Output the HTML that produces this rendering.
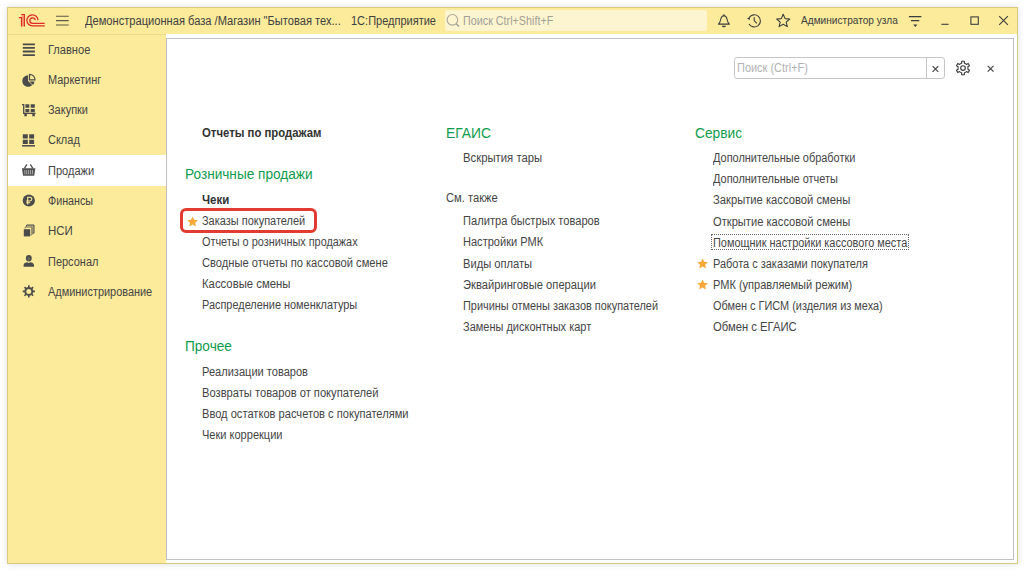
<!DOCTYPE html>
<html lang="ru">
<head>
<meta charset="utf-8">
<title>1С:Предприятие</title>
<style>
html,body{margin:0;padding:0;}
body{width:1024px;height:571px;background:#fff;position:relative;overflow:hidden;font-family:"Liberation Sans",Arial,sans-serif;font-size:12px;color:#3b3b3b;}
div,svg{position:absolute;}
#win{left:7px;top:7px;width:1011px;height:557px;box-sizing:border-box;border:1px solid #d8ca7c;background:#fff;box-shadow:0 0 7px rgba(0,0,0,.13);}
#title{left:8px;top:8px;width:1009px;height:26px;background:#fbeb9b;}
#titleline{left:8px;top:34px;width:158px;height:1px;background:#eadc8f;}
#side{left:8px;top:35px;width:158px;height:528px;background:#fbeb9b;}
#sel{left:8px;top:155px;width:158px;height:31px;background:#fff;}
#panel{left:166px;top:38px;width:848px;height:522px;box-sizing:border-box;border:1px solid #c0c0c0;background:#fff;}
#gsearch{left:445px;top:10px;width:262px;height:21px;background:#fdf5cf;border-radius:2px;}
.i,.h,.s,.tt{white-space:nowrap;transform-origin:0 0;}
.i{font-size:12px;line-height:14px;color:#454545;}
.b{font-weight:bold;color:#333;}
.h{font-size:15.2px;line-height:17px;color:#0e9c4c;}
.s{font-size:12px;line-height:14px;color:#444;}
.tt{font-size:12px;line-height:14px;color:#404040;}
.ph{font-size:12px;line-height:14px;color:#a3a097;}
.us{font-size:10.2px;line-height:11px;}
.ph2{color:#b2b2b2;}
#hl{left:180px;top:208px;width:137px;height:25px;box-sizing:border-box;border:3px solid #e23b32;border-radius:6px;}
#focus{left:711px;top:234px;width:198px;height:16px;box-sizing:border-box;border:1px dotted #6a6a6a;}
#psearch{left:734px;top:57px;width:211px;height:22px;box-sizing:border-box;border:1px solid #c6c6c6;border-radius:3px;background:#fff;}
#psdiv{left:926px;top:58px;width:1px;height:20px;background:#c6c6c6;}
</style>
</head>
<body>
<div id="win"></div>
<div id="title"></div>
<div id="titleline"></div>
<div id="side"></div>
<div id="sel"></div>
<div id="panel"></div>
<div id="gsearch"></div>

<!-- title bar -->
<svg id="logo" style="left:18px;top:13px" width="28" height="15" viewBox="18 13 28 15">
  <path d="M21.5 14.4H24.4V26.5H21.5V17.6Z" fill="#f0a274"/>
  <path d="M19 17.6H21.5V26.6M21.2 14.5H24.4V26.6" stroke="#df2a26" stroke-width="1.15" fill="none"/>
  <path d="M37.95 20.1 A5.55 5.55 0 1 0 32.3 25.9 L44.7 25.9" stroke="#df2a26" stroke-width="1.25" fill="none"/>
  <path d="M35.3 20.1 A2.75 2.75 0 1 0 32.45 23.3 L44.7 23.3" stroke="#df2a26" stroke-width="1.25" fill="none"/>
</svg>
<svg id="burger" style="left:55px;top:14px" width="15" height="13" viewBox="55 14 15 13">
  <path d="M56 16.3H68.7M56 20.6H68.7M56 25H68.7" stroke="#5e5a48" stroke-width="1.1" fill="none"/>
</svg>
    <div class="tt" style="left:84.9px;top:14px;transform:scaleX(0.9264)">Демонстрационная база /Магазин "Бытовая тех...</div>
    <div class="tt" style="left:350.7px;top:14px;transform:scaleX(0.9175)">1С:Предприятие</div>
    <div class="tt ph" style="left:463.4px;top:14px;transform:scaleX(0.8975)">Поиск Ctrl+Shift+F</div>
    <div class="tt us" style="left:800.8px;top:15px;transform:scaleX(0.9919)">Администратор узла</div>
<svg id="mag" style="left:445px;top:12px" width="17" height="17" viewBox="445 12 17 17">
  <circle cx="452.4" cy="19.8" r="5.3" stroke="#a9a69a" stroke-width="1.1" fill="none"/>
  <path d="M456.3 23.7L459 26.6" stroke="#a9a69a" stroke-width="1.6" fill="none"/>
</svg>
<svg id="bell" style="left:716px;top:12px" width="17" height="17" viewBox="716 12 17 17">
  <path d="M718.4 24.1 C720.7 22.4 720.5 19.4 721.2 17.7 C721.8 16.3 722.8 15.7 723.9 15.6 C725 15.7 726 16.3 726.6 17.7 C727.3 19.4 727.1 22.4 729.4 24.1 Z M723.9 14.2V15.6" stroke="#3d3d3d" stroke-width="1.1" fill="none" stroke-linejoin="round"/>
  <path d="M721.9 25.7H725.9A2 1.5 0 0 1 721.9 25.7Z" fill="#3d3d3d"/>
</svg>
<svg id="hist" style="left:745px;top:12px" width="18" height="17" viewBox="745 12 18 17">
  <path d="M749.2 17.6 A6.1 6.1 0 1 1 749 23.9" stroke="#3d3d3d" stroke-width="1.1" fill="none"/>
  <path d="M747 18.5L749.9 17V19.9Z" fill="#3d3d3d"/>
  <path d="M754.2 17.2 V20.5 L756.8 23.3" stroke="#3d3d3d" stroke-width="1.1" fill="none"/>
</svg>
<svg id="fav" style="left:775px;top:12px" width="17" height="17" viewBox="775 12 17 17">
  <path d="M783.2 14.3 L785.1 18.6 L789.7 19 L786.2 22.1 L787.3 26.6 L783.2 24.2 L779.1 26.6 L780.2 22.1 L776.7 19 L781.3 18.6 Z" stroke="#3d3d3d" stroke-width="1.1" fill="none" stroke-linejoin="round"/>
</svg>
<svg id="menu" style="left:907px;top:14px" width="16" height="14" viewBox="907 14 16 14">
  <path d="M908.9 16.6H921.4M911 20.6H919.3" stroke="#3d3d3d" stroke-width="1.1" fill="none"/>
  <path d="M913.2 24.6H917.4L915.3 27Z" fill="#3d3d3d"/>
</svg>
<svg id="wmin" style="left:940px;top:14px" width="10" height="13" viewBox="940 14 10 13">
  <path d="M941.4 24.3H948.6" stroke="#3d3d3d" stroke-width="1.1" fill="none"/>
</svg>
<svg id="wmax" style="left:969px;top:15px" width="11" height="11" viewBox="969 15 11 11">
  <rect x="970.9" y="16.9" width="7.4" height="7.4" stroke="#3d3d3d" stroke-width="1.1" fill="none"/>
</svg>
<svg id="wclose" style="left:997px;top:14px" width="13" height="13" viewBox="997 14 13 13">
  <path d="M999.2 16.2L1007.9 24.9M1007.9 16.2L999.2 24.9" stroke="#3d3d3d" stroke-width="1.1" fill="none"/>
</svg>

<!-- sidebar -->
    <div class="s" style="left:47.9px;top:43px;transform:scaleX(0.9224)">Главное</div>
    <div class="s" style="left:47.9px;top:73px;transform:scaleX(0.9118)">Маркетинг</div>
    <div class="s" style="left:47.9px;top:103px;transform:scaleX(0.9140)">Закупки</div>
    <div class="s" style="left:47.9px;top:133px;transform:scaleX(0.9155)">Склад</div>
    <div class="s" style="left:47.9px;top:164px;transform:scaleX(0.9197)">Продажи</div>
    <div class="s" style="left:47.9px;top:194px;transform:scaleX(0.8950)">Финансы</div>
    <div class="s" style="left:47.9px;top:224px;transform:scaleX(0.9550)">НСИ</div>
    <div class="s" style="left:47.9px;top:255px;transform:scaleX(0.9148)">Персонал</div>
    <div class="s" style="left:47.9px;top:285px;transform:scaleX(0.9105)">Администрирование</div>
<svg id="ic1" style="left:21px;top:42px" width="16" height="16" viewBox="21 42 16 16">
  <path d="M22.8 44.4H34.9M22.8 47.9H34.9M22.8 51.5H34.9M22.8 55.1H34.9" stroke="#4b4b4b" stroke-width="1.8" fill="none"/>
</svg>
<svg id="ic2" style="left:21px;top:72px" width="16" height="16" viewBox="21 72 16 16">
  <path d="M28.1 81 L28.1 75.2 A5.8 5.8 0 1 0 32.2 85.1 Z" fill="#4b4b4b"/>
  <path d="M29.3 81.4 L34.4 81.4 A5.6 5.6 0 0 1 33.1 84.9 Z" fill="#4b4b4b"/>
  <path d="M29.5 74.3 A5.5 5.5 0 0 1 35 79.8 L29.5 79.8 Z" stroke="#4b4b4b" stroke-width="1.2" fill="none"/>
</svg>
<svg id="ic3" style="left:21px;top:102px" width="16" height="16" viewBox="21 102 16 16">
  <path d="M22 104.6H23.7V113.3H35.6" stroke="#4b4b4b" stroke-width="1.3" fill="none"/>
  <path d="M25.4 104.3h3.9v3.5h-3.9zM30.7 104.3h4.1v3.5h-4.1zM25.4 108.9h3.9v3.3h-3.9zM30.7 108.9h4.1v3.3h-4.1z" fill="#4b4b4b"/>
  <rect x="24.3" y="113.8" width="2.5" height="2.5" fill="#4b4b4b"/><rect x="32.3" y="113.8" width="2.5" height="2.5" fill="#4b4b4b"/>
</svg>
<svg id="ic4" style="left:21px;top:132px" width="16" height="16" viewBox="21 132 16 16">
  <path d="M22.8 134.2h5v4.4h-5zM29.2 134.2h4.9v4.4h-4.9zM22.8 139.7h5v4.2h-5zM29.2 139.7h4.9v4.2h-4.9z" fill="#4b4b4b"/>
  <path d="M22 145.8H35" stroke="#4b4b4b" stroke-width="1.5" fill="none"/>
</svg>
<svg id="ic5" style="left:21px;top:162px" width="16" height="16" viewBox="21 162 16 16">
  <path d="M21.9 168.2H35.4L34.2 175.7H23.1Z" fill="#4f4f4f"/>
  <path d="M24.7 170L25 174.4M26.7 170L26.8 174.4M28.65 170V174.4M30.6 170L30.5 174.4M32.6 170L32.3 174.4" stroke="#e8e8e8" stroke-width="0.6" fill="none"/>
  <path d="M24.4 168.4L26.9 164.4M32.8 168.4L30.3 164.4" stroke="#4f4f4f" stroke-width="1.3" fill="none"/>
</svg>
<svg id="ic6" style="left:21px;top:192px" width="16" height="16" viewBox="21 192 16 16">
  <circle cx="28.8" cy="200.5" r="6.1" fill="#4b4b4b"/>
  <path d="M27.7 204.6V197.2H29.9A1.9 1.9 0 0 1 29.9 201H26.2M26.2 202.8H30.2" stroke="#fbeb9b" stroke-width="1.1" fill="none"/>
</svg>
<svg id="ic7" style="left:21px;top:222px" width="16" height="16" viewBox="21 222 16 16">
  <path d="M26.4 225H34V233.2H31V226.6H26.4Z" fill="#b9b283"/>
  <path d="M26.6 226.6V225H34V233.2H32.4" stroke="#4b4b4b" stroke-width="1" fill="none"/>
  <path d="M25.2 228.4V227H32V234.8H30.6" stroke="#7a7658" stroke-width="1" fill="none"/>
  <rect x="23.8" y="229.2" width="6.4" height="7.2" fill="#4b4b4b"/>
</svg>
<svg id="ic8" style="left:21px;top:252px" width="16" height="16" viewBox="21 252 16 16">
  <ellipse cx="28.8" cy="258.2" rx="2.9" ry="3.2" fill="#4b4b4b"/>
  <ellipse cx="28.8" cy="259" rx="1.4" ry="1.7" fill="#6d6a55"/>
  <path d="M23.6 266.7V265C23.6 263.4 25.6 262.5 27.3 262.3L28.8 263L30.3 262.3C32 262.5 34 263.4 34 265V266.7Z" fill="#4b4b4b"/>
</svg>
<svg id="ic9" style="left:21px;top:284px" width="16" height="16" viewBox="21 284 16 16">
  <circle cx="28.8" cy="291.4" r="3.5" stroke="#4b4b4b" stroke-width="2" fill="none"/>
  <path d="M28.8 285.3V287.4M28.8 295.4V297.5M22.7 291.4H24.8M32.8 291.4H34.9M24.5 287.1L26 288.6M31.6 294.2L33.1 295.7M24.5 295.7L26 294.2M31.6 288.6L33.1 287.1" stroke="#4b4b4b" stroke-width="1.6" fill="none"/>
</svg>

<!-- panel content -->
<div id="hl"></div>
<div id="focus"></div>
    <div class="i b" style="left:202.4px;top:126px;transform:scaleX(0.9461)">Отчеты по продажам</div>
    <div class="h" style="left:185.1px;top:165px;transform:scaleX(0.8966)">Розничные продажи</div>
    <div class="i b" style="left:202.4px;top:193px;transform:scaleX(0.9579)">Чеки</div>
    <div class="i" style="left:202.4px;top:214px;transform:scaleX(0.9139)">Заказы покупателей</div>
    <div class="i" style="left:202.4px;top:235px;transform:scaleX(0.9064)">Отчеты о розничных продажах</div>
    <div class="i" style="left:202.4px;top:256px;transform:scaleX(0.9288)">Сводные отчеты по кассовой смене</div>
    <div class="i" style="left:202.4px;top:277px;transform:scaleX(0.9439)">Кассовые смены</div>
    <div class="i" style="left:202.4px;top:298px;transform:scaleX(0.9097)">Распределение номенклатуры</div>
    <div class="h" style="left:185.1px;top:337px;transform:scaleX(0.8971)">Прочее</div>
    <div class="i" style="left:202.4px;top:365px;transform:scaleX(0.9217)">Реализации товаров</div>
    <div class="i" style="left:202.4px;top:386px;transform:scaleX(0.9305)">Возвраты товаров от покупателей</div>
    <div class="i" style="left:202.4px;top:407px;transform:scaleX(0.9257)">Ввод остатков расчетов с покупателями</div>
    <div class="i" style="left:202.4px;top:428px;transform:scaleX(0.9192)">Чеки коррекции</div>
    <div class="h" style="left:445.7px;top:124px;transform:scaleX(0.9097)">ЕГАИС</div>
    <div class="i" style="left:463.2px;top:151px;transform:scaleX(0.9437)">Вскрытия тары</div>
    <div class="i" style="left:445.7px;top:191px;transform:scaleX(0.9320)">См. также</div>
    <div class="i" style="left:463.2px;top:214px;transform:scaleX(0.9269)">Палитра быстрых товаров</div>
    <div class="i" style="left:463.2px;top:235px;transform:scaleX(0.9204)">Настройки РМК</div>
    <div class="i" style="left:463.2px;top:257px;transform:scaleX(0.9291)">Виды оплаты</div>
    <div class="i" style="left:463.2px;top:278px;transform:scaleX(0.9309)">Эквайринговые операции</div>
    <div class="i" style="left:463.2px;top:299px;transform:scaleX(0.9094)">Причины отмены заказов покупателей</div>
    <div class="i" style="left:463.2px;top:320px;transform:scaleX(0.9157)">Замены дисконтных карт</div>
    <div class="h" style="left:695.3px;top:124px;transform:scaleX(0.9036)">Сервис</div>
    <div class="i" style="left:712.7px;top:151px;transform:scaleX(0.9131)">Дополнительные обработки</div>
    <div class="i" style="left:712.7px;top:172px;transform:scaleX(0.9124)">Дополнительные отчеты</div>
    <div class="i" style="left:712.7px;top:193px;transform:scaleX(0.9345)">Закрытие кассовой смены</div>
    <div class="i" style="left:712.7px;top:215px;transform:scaleX(0.9288)">Открытие кассовой смены</div>
    <div class="i" style="left:712.7px;top:236px;transform:scaleX(0.9116)">Помощник настройки кассового места</div>
    <div class="i" style="left:712.7px;top:257px;transform:scaleX(0.9135)">Работа с заказами покупателя</div>
    <div class="i" style="left:712.7px;top:278px;transform:scaleX(0.9194)">РМК (управляемый режим)</div>
    <div class="i" style="left:712.7px;top:299px;transform:scaleX(0.9092)">Обмен с ГИСМ (изделия из меха)</div>
    <div class="i" style="left:712.7px;top:320px;transform:scaleX(0.9388)">Обмен с ЕГАИС</div>
<svg class="star" style="left:186.8px;top:215.8px" width="12" height="11" viewBox="0 0 12 11"><path d="M5.6 0.4L7.15 3.85L11 4.25L8.15 6.8L8.95 10.5L5.6 8.6L2.25 10.5L3.05 6.8L0.2 4.25L4.05 3.85Z" fill="#f8a938"/></svg>
<svg class="star" style="left:696.9px;top:258.2px" width="12" height="11" viewBox="0 0 12 11"><path d="M5.6 0.4L7.15 3.85L11 4.25L8.15 6.8L8.95 10.5L5.6 8.6L2.25 10.5L3.05 6.8L0.2 4.25L4.05 3.85Z" fill="#f8a938"/></svg>
<svg class="star" style="left:696.9px;top:279.3px" width="12" height="11" viewBox="0 0 12 11"><path d="M5.6 0.4L7.15 3.85L11 4.25L8.15 6.8L8.95 10.5L5.6 8.6L2.25 10.5L3.05 6.8L0.2 4.25L4.05 3.85Z" fill="#f8a938"/></svg>

<!-- panel search -->
<div id="psearch"></div>
<div id="psdiv"></div>
    <div class="i ph2" style="left:736.7px;top:61px;transform:scaleX(0.9139)">Поиск (Ctrl+F)</div>
<svg id="psx" style="left:931px;top:64px" width="10" height="10" viewBox="931 64 10 10">
  <path d="M932.6 66.1L938.3 71.8M938.3 66.1L932.6 71.8" stroke="#444" stroke-width="1.2" fill="none"/>
</svg>
<svg id="gear" style="left:954px;top:59px" width="18" height="18" viewBox="-9 -9 18 18">
  <g stroke="#3f3f3f" stroke-width="1.15" fill="none" stroke-linejoin="round">
  <circle cx="0" cy="0" r="2.3"/>
  <path d="M-1.38 -4.81L-1.32 -6.77L1.32 -6.77L1.38 -4.81A5.0 5.0 0 0 1 3.47 -3.60L5.21 -4.53L6.52 -2.25L4.85 -1.21A5.0 5.0 0 0 1 4.85 1.21L6.52 2.25L5.21 4.53L3.47 3.60A5.0 5.0 0 0 1 1.38 4.81L1.32 6.77L-1.32 6.77L-1.38 4.81A5.0 5.0 0 0 1 -3.47 3.60L-5.21 4.53L-6.52 2.25L-4.85 1.21A5.0 5.0 0 0 1 -4.85 -1.21L-6.52 -2.25L-5.21 -4.53L-3.47 -3.60A5.0 5.0 0 0 1 -1.38 -4.81 Z"/>
  </g>
</svg>
<svg id="pclose" style="left:986px;top:64px" width="10" height="10" viewBox="986 64 10 10">
  <path d="M987.7 65.9L993.5 71.7M993.5 65.9L987.7 71.7" stroke="#444" stroke-width="1.2" fill="none"/>
</svg>
</body>
</html>
